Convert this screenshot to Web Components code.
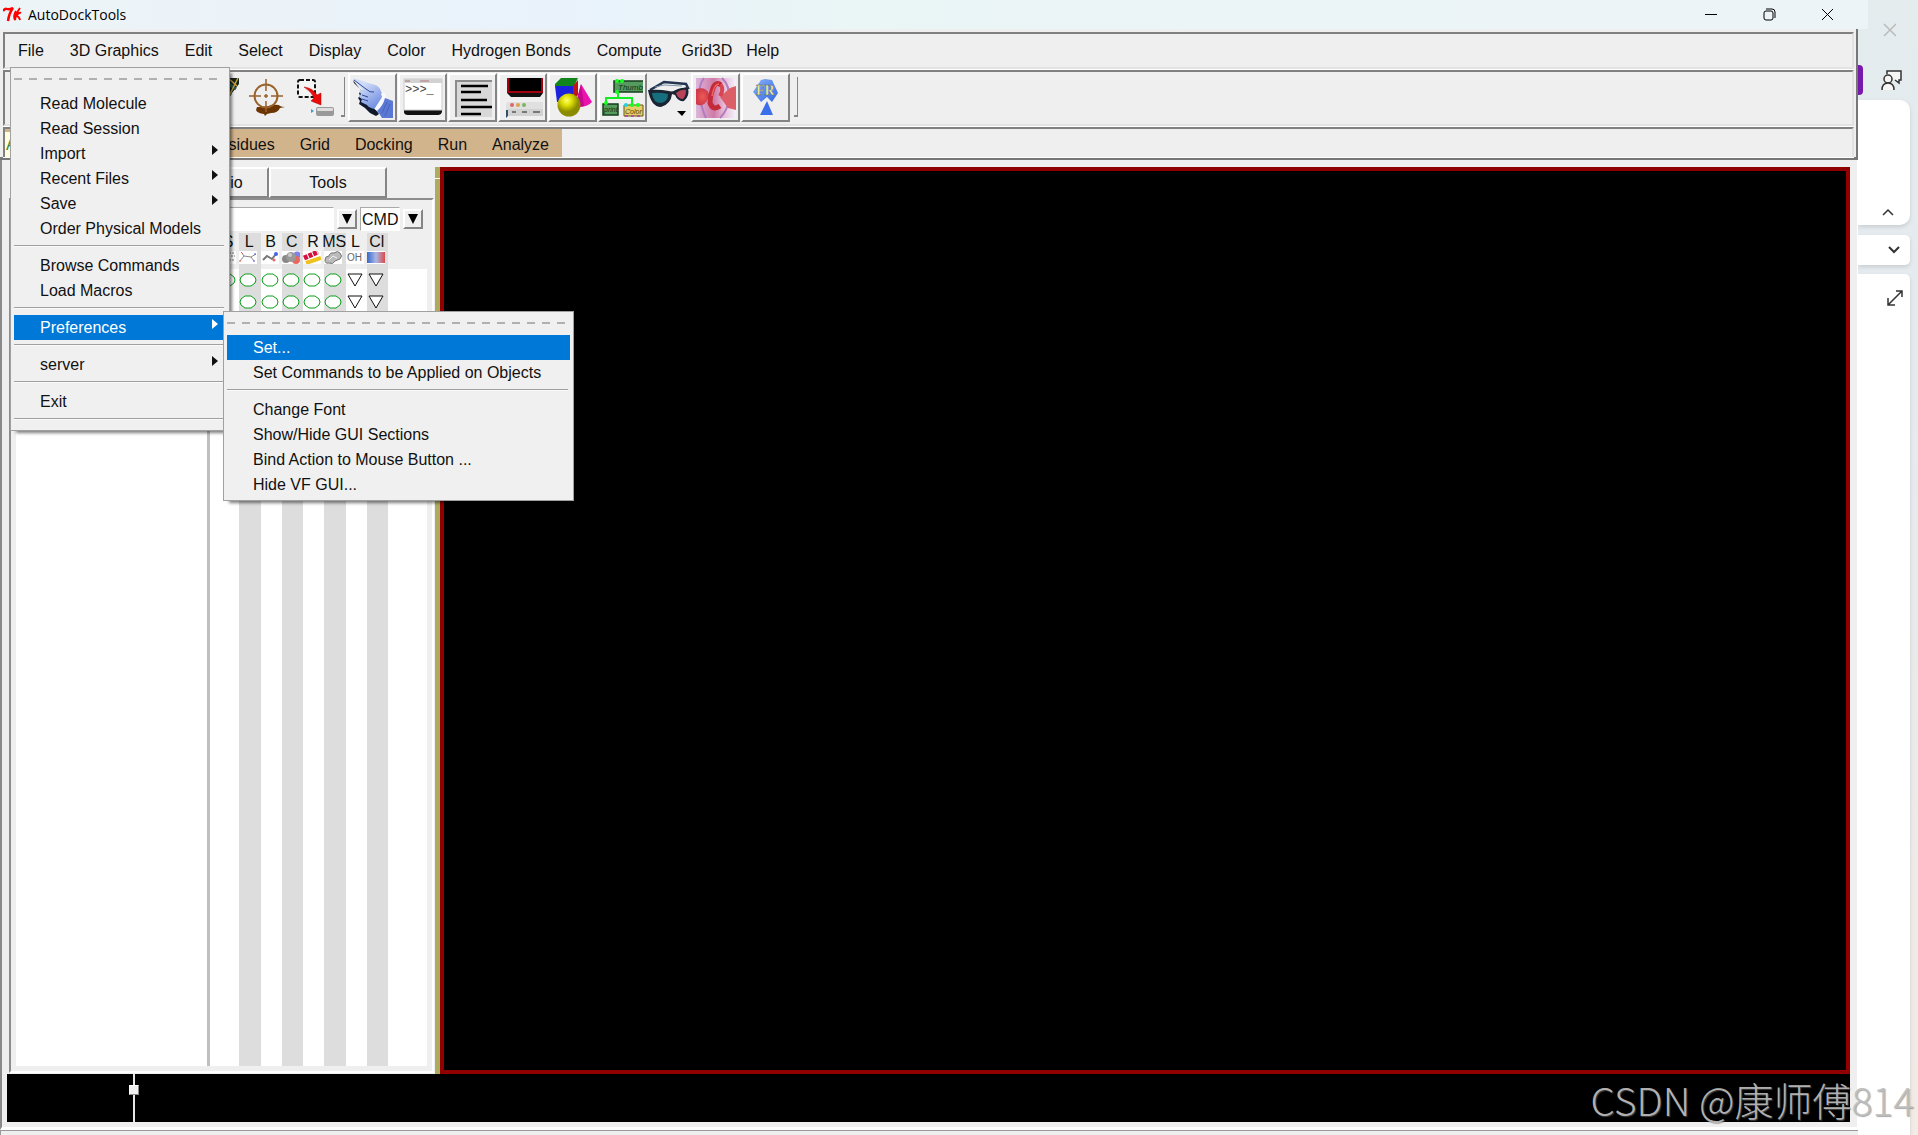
<!DOCTYPE html>
<html lang="en">
<head>
<meta charset="utf-8">
<title>AutoDockTools</title>
<style>
    html, body {
        height: 100%;
        margin: 0;
    }
    body {
        overflow: hidden;
        background: #e5ebee;
        font: 16px/25px "Liberation Sans", Arial, sans-serif;
        color: #111;
    }
</style>
</head>
<body>
<adt-desktop></adt-desktop>

<script>
// Toolbar pictures, all drawn on a 40x40 grid.
const ICONS = {
    plaid: `
        <path d="M4 0H41V6L30 20 10 12Z" fill="#16241f"/>
        <path d="M28 4l10 7M26 12l7 5" stroke="#31554a" stroke-width="3"/>
        <path d="M40 0l-8 16M30 0l9 8" stroke="#c7a23a" stroke-width="1.5"/>`,
    target: `
        <path d="M11 29q10 0 14-2 8-1 9 1 2 1 5 1l-5 1q-2 5-9 5l-4 1-2 2-1-2q-7-1-8-4z" fill="#6b3400"/>
        <circle cx="20" cy="18" r="11.5" fill="none" stroke="#9a622c" stroke-width="2"/>
        <path d="M20 1v12M20 16v4M20 23v11M3 18h12M18 18h4M25 18h12" stroke="#9a622c" stroke-width="1.5"/>`,
    marquee: `
        <rect x="4" y="2" width="17" height="17" rx="2" fill="#f4f4f4" stroke="#111" stroke-width="2" stroke-dasharray="4 2"/>
        <path d="M10 9q9 1 13 8l4-2v12l-10-4 3-3q-2-6-10-11z" fill="#e80c0c" stroke="#a00" stroke-width=".5"/>
        <path d="M17 31l3 2-3 2z" fill="#3a9bc4"/>
        <rect x="22" y="29" width="18" height="9" rx="2" fill="#999"/>
        <rect x="23" y="30" width="16" height="3" rx="1" fill="#ddd"/>`,
    hand: `
        <defs><linearGradient id="g" x1="0" y1="0" x2=".7" y2="1"><stop offset=".3" stop-color="#cfdcf8"/><stop offset="1" stop-color="#6f8ce0"/></linearGradient></defs>
        <path d="M0 2l1 3 8 8-3 2 1 3-2 2 2 3-1 3 6 4 5 5 6 3 3-2z" fill="#10182c"/>
        <path d="M0 1q1-1 3 0l16 5q6 1 8 5l3 7-8 13q-6-1-8-4l-6-3 1-3-3-2 2-3-2-3 4-1z" fill="url(#g)"/>
        <path d="M1 2l12 9q4 4 8 3M9 17l6 2M9 21l6 2" stroke="#324a91" fill="none"/>
        <path d="M29 15q4 3 0 8l-6 9" stroke="#f5f8ff" stroke-width="4" fill="none"/>
        <path d="M32 20l8 3v17H29q-2-4-5-7 6-5 8-13z" fill="#5b78d4"/>
        <path d="M34 24l-5 11M37 26l-5 12" stroke="#4763bd"/>`,
    shell: `
        <path d="M1 31h38v3q-1 3-4 3H5q-4 0-4-3z" fill="#111"/>
        <rect x="1" y="1" width="38" height="31" fill="#fff" stroke="#ccc"/>
        <path d="M1 1h38v4H1z" fill="#d2d2d2"/>
        <path d="M2 3h5M17 3h9" stroke="#a77"/>
        <text x="2" y="15" font-family="Liberation Mono, monospace" font-size="12" fill="#444">&gt;&gt;&gt;_</text>`,
    lines: `
        <rect x="2" y="2" width="37" height="37" fill="#d8d8d8"/>
        <path d="M3 39V3H39" fill="none" stroke="#8b8b8b" stroke-width="2"/>
        <path d="M8 8h27M8 14h20M8 22h26M8 29h31M8 36h20" stroke="#000" stroke-width="2.5"/>`,
    windows: `
        <path d="M4 0h36v15l-3 4H8l-4-4z" fill="#111"/>
        <path d="M5 0v14h34V0" fill="#000" stroke="#a5000f" stroke-width="2"/>
        <path d="M3 27q0-3 3-3h34v14H3z" fill="#e0e0e0"/>
        <path d="M3 32v8l2-2v-6z" fill="#31506b"/>
        <path d="M5 31h35v7H5z" fill="#d2d2d2"/>
        <circle cx="9" cy="27" r="2" fill="#d66"/><circle cx="15" cy="27" r="2" fill="#dda04d"/><circle cx="21" cy="27" r="2" fill="#79b462"/>
        <path d="M9 34h4M19 34h5M30 34h7" stroke="#777" stroke-width="2"/>`,
    shapes: `
        <path d="M2 6L8 0H25L21 8H2z" fill="#11851b"/>
        <path d="M2 8h18v16H4z" fill="#1c22dc"/>
        <path d="M20 8l5-6v15l-5 5z" fill="#c11414"/>
        <path d="M28 6L39 24q-5 6-17 5z" fill="#ec12ad"/>
        <path d="M28 6l3 22-9 1z" fill="#c50791"/>
        <defs><radialGradient id="s" cx=".4" cy=".3"><stop stop-color="#ffff6a"/><stop offset=".45" stop-color="#dede06"/><stop offset="1" stop-color="#8b8b00"/></radialGradient></defs>
        <circle cx="16" cy="27" r="11.5" fill="url(#s)"/>`,
    network: `
        <path d="M40 3H11v11h29" fill="#559b5f" stroke="#163e1d" stroke-width="1.5"/>
        <text x="15" y="12" font-family="Liberation Sans, sans-serif" font-size="8" font-style="italic" fill="#0e3013">Thumb</text>
        <path d="M15 14v6M3 26v-6h26v6" fill="none" stroke="#12ed21" stroke-width="2"/>
        <path d="M0 26h15v11H0z" fill="#559b5f" stroke="#163e1d" stroke-width="1.5"/>
        <text x="1" y="34" font-family="Liberation Sans, sans-serif" font-size="7" font-style="italic" fill="#0e3013">print</text>
        <path d="M21 27h19v11H21z" fill="#e6cf69" stroke="#685716"/>
        <text x="22" y="36" font-family="Liberation Sans, sans-serif" font-size="7" font-style="italic" fill="#4d3f0c">Color</text>
        <path d="M22 38h18" stroke="#b54da0" stroke-width="2" stroke-dasharray="3 3"/>
        <circle cx="14" cy="3" r="2" fill="#14ff1e"/><circle cx="19" cy="3" r="2" fill="#14ff1e"/><circle cx="14" cy="14" r="2" fill="#14ff1e"/><circle cx="3" cy="25" r="2" fill="#14ff1e"/><circle cx="23" cy="27" r="2" fill="#20d5e4"/><circle cx="29" cy="27" r="2" fill="#14ff1e"/><circle cx="35" cy="27" r="2" fill="#14ff1e"/>`,
    glasses: `
        <path d="M2 12L16 4l22 2 2 4-20 6" fill="none" stroke="#23354f" stroke-width="2.5"/>
        <path d="M7 9l9-2 18 1" fill="none" stroke="#7f93a8"/>
        <path d="M0 12q11-1 21 1l4 1q6-5 15-4 2 8-4 13-6 1-9-6l-3-1q-1 10-11 13Q3 29 0 12z" fill="#1b2433"/>
        <path d="M4 15q8-1 16 1 0 8-7 9-8 0-9-10z" fill="#166f7e"/>
        <path d="M28 15q5-4 10-3 0 6-3 9-5 0-7-6z" fill="#b94358"/>
        <path d="M29 33h9l-4 5z" fill="#000"/>`,
    orbital: `
        <defs><linearGradient id="o"><stop stop-color="#dcb6dc"/><stop offset=".45" stop-color="#cf7aa6"/><stop offset=".7" stop-color="#e6bcd9"/><stop offset="1" stop-color="#f4f2fb"/></linearGradient>
        <radialGradient id="r"><stop stop-color="#ef5a55"/><stop offset="1" stop-color="#cf3b4a"/></radialGradient></defs>
        <path d="M0 0h40v40H0z" fill="url(#o)"/>
        <path d="M8 0Q2 8 4 20t6 20M26 0q8 8 7 20t-9 20" fill="none" stroke="#b07cc0" stroke-width="2"/>
        <path d="M0 11q10-3 13 5-1 9-7 11-4 1-6-1z" fill="url(#r)"/>
        <path d="M24 19l10-9 6-2v24l-8-2z" fill="#dc5f68"/>
        <path d="M25 7q-5-4-8 3t-3 15q3 8 10 3" fill="none" stroke="#c42b38" stroke-width="5"/>
        <path d="M25 7q3 5-1 11" fill="none" stroke="#d84450" stroke-width="4"/>
        <path d="M23 6q-5 0-7 12" fill="none" stroke="#f0665f" stroke-width="1.5"/>`,
    fr: `
        <defs><linearGradient id="f" x1="0" y1="0" x2="1" y2="1"><stop stop-color="#8bb2f8"/><stop offset="1" stop-color="#2f66e4"/></linearGradient></defs>
        <path d="M7 14L15 2l4-1 7 1 6 13-6 9-5-5-6 5-7-9z" fill="url(#f)"/>
        <path d="M21 23l6 14H14z" fill="#3a6eea"/>
        <text x="10" y="17" font-family="Liberation Serif, serif" font-size="14" font-weight="bold" fill="#f7efa0" stroke="#5c6a60" stroke-width=".4">FR</text>`
};

// Small pictures under the column letters of the dashboard, on an 18x13 grid.
const COLUMN_ICONS = {
    dots: '<path d="M11 2h5M13 5h4M11 9h5" stroke="#777" stroke-dasharray="2 1"/>',
    lines: '<path d="M1 10l4-5 7 1 5-3M5 5L3 2M12 6l3 4" fill="none" stroke="#888"/><path d="M2 1l2 2M1 9v2" stroke="#e55"/><path d="M16 2v2M15 9v2" stroke="#55e"/>',
    sticks: '<path d="M2 9l4-4 5 3 4-5" fill="none" stroke="#777" stroke-width="2"/><circle cx="15" cy="3" r="2" fill="#46e"/><circle cx="13" cy="9" r="1.5" fill="#e66"/>',
    spheres: '<circle cx="15" cy="4" r="3.5" fill="#7f82e8"/><circle cx="14" cy="9" r="4" fill="#e66860"/><circle cx="4" cy="8" r="4" fill="#888"/><circle cx="9" cy="6" r="5" fill="#999"/><circle cx="8" cy="4" r="2" fill="#ccc"/>',
    ribbon: '<path d="M1 7L15 1" stroke="#d3113b" stroke-width="5" stroke-dasharray="4 1"/><path d="M3 12l15-5" stroke="#efc21e" stroke-width="4"/>',
    surface: '<path d="M1 9q0-4 4-4 1-4 5-3 4-3 6 0 3 3 0 6l-5 2q-2 4-6 2-4 1-4-3z" fill="#bbb" stroke="#777"/><path d="M5 9l4-4 4 2" stroke="#eee" fill="none"/>',
    label: '<text x="1" y="10" font-family="Liberation Sans, sans-serif" font-size="10" fill="#666">OH</text>',
    color: '<defs><linearGradient id="c"><stop stop-color="#3768c8"/><stop offset=".5" stop-color="#a9b8e6"/><stop offset="1" stop-color="#dc4a4a"/></linearGradient></defs><path d="M0 1h18v11H0z" fill="url(#c)"/>'
};

function define(name, cls) {
    customElements.get(name) || customElements.define(name, cls);
}

class TitleBar extends HTMLElement {
    constructor() {
        super();
        this.attachShadow({ mode: 'open' }).innerHTML = `
        <style>
            :host {
                display: flex;
                align-items: center;
                height: 29px;
                padding-left: 3px;
                margin-right: -10px;
                background: linear-gradient(90deg, #edf4f7, #e9f2fb 30%, #eaf5f6 45%, #edf4f8);
                font: 14px/28px "Open Sans", "Noto Sans", sans-serif;
                color: #000;
            }
            .title { flex: 1; margin-left: 6px; }
            button {
                width: 58px;
                height: 28px;
                padding: 0;
                border: 0;
                background: none;
            }
            .buttons { display: flex; margin-right: 12px; }
            svg { display: block; margin: auto; fill: none; stroke: #000; }
            .logo { margin: 0; stroke: red; stroke-width: 2; }
        </style>
        <svg class="logo" width="19" height="15" viewBox="0 0 19 15">
            <path d="M0 4q2-3 4-2t6-1Q6 6 5 14" stroke-width="2.5"/>
            <path d="M17 1q-4 5-5 12M13 4q-3 5-1 9M18 6q-2-1-5 3 3 0 4 4"/>
        </svg>
        <span class="title">AutoDockTools</span>
        <div class="buttons">
            <button aria-label="Minimize"><svg width="12" height="12"><path d="M0 5h12v1H0z" fill="#000" stroke="none"/></svg></button>
            <button aria-label="Restore"><svg width="13" height="13"><rect x="1" y="3" width="9" height="9" rx="2"/><path d="M3 1h6q3 0 3 3v6"/></svg></button>
            <button aria-label="Close"><svg width="13" height="13"><path d="M1 1l11 11M12 1L1 12"/></svg></button>
        </div>`;
    }
}
define('title-bar', TitleBar);

class MenuItem extends HTMLElement {
    constructor() {
        super();
        this.attachShadow({ mode: 'open' }).innerHTML = `
        <style>
            :host { display: block; position: relative; }
            button {
                display: flex;
                align-items: center;
                justify-content: space-between;
                width: 100%;
                height: 25px;
                padding: 0 8px 0 26px;
                border: 0;
                background: none;
                color: inherit;
                font: inherit;
                white-space: nowrap;
            }
            :host([active]) button { background: #0078d7; color: #fff; }
            svg { display: none; margin-bottom: 8px; fill: currentColor; }
            :host([cascade]) svg { display: block; }
        </style>
        <button role="menuitem"><slot></slot><svg width="6" height="10"><path d="M0 0l6 5-6 5z"/></svg></button>
        <slot name="submenu"></slot>`;
    }
}
define('menu-item', MenuItem);

class MenuPopup extends HTMLElement {
    constructor() {
        super();
        this.attachShadow({ mode: 'open' }).innerHTML = `
        <style>
            :host {
                display: block;
                position: absolute;
                z-index: 5;
                box-sizing: border-box;
                padding: 0 3px 4px;
                border: 1px solid #a0a0a0;
                background: #f0f0f0;
                box-shadow: 4px 4px 3px -2px rgba(0, 0, 0, .5);
                color: #111;
            }
            .tearoff {
                height: 2px;
                padding: 10px 0 11px;
                margin-right: 2px;
                background: repeating-linear-gradient(90deg, #b0b0b0 0 8px, transparent 8px 15px) content-box;
            }
            ::slotted(hr) {
                height: 1px;
                margin: 4px 2px 6px 0;
                border: 0;
                border-top: 1px solid #a0a0a0;
                background: #fafafa;
            }
        </style>
        <div class="tearoff"></div>
        <slot></slot>`;
        this.setAttribute('role', 'menu');
    }
}
define('menu-popup', MenuPopup);

class MenuStrip extends HTMLElement {
    constructor() {
        super();
        this.attachShadow({ mode: 'open' }).innerHTML = `
        <style>
            :host { display: flex; align-items: center; position: relative; }
            button {
                padding: 0 13px;
                border: 0;
                background: none;
                color: inherit;
                font: inherit;
                white-space: nowrap;
            }
            .narrow { padding: 0 7px; }
            .file { left: 5px; top: 33px; width: 220px; }
            .prefs { left: 209px; top: -4px; width: 351px; padding-bottom: 3px; }
        </style>
        <button>File</button>
        <button>3D Graphics</button>
        <button>Edit</button>
        <button>Select</button>
        <button>Display</button>
        <button>Color</button>
        <button>Hydrogen Bonds</button>
        <button>Compute</button>
        <button class="narrow">Grid3D</button>
        <button class="narrow">Help</button>
        <menu-popup class="file">
            <menu-item>Read Molecule</menu-item>
            <menu-item>Read Session</menu-item>
            <menu-item cascade>Import</menu-item>
            <menu-item cascade>Recent Files</menu-item>
            <menu-item cascade>Save</menu-item>
            <menu-item>Order Physical Models</menu-item>
            <hr>
            <menu-item>Browse Commands</menu-item>
            <menu-item>Load Macros</menu-item>
            <hr>
            <menu-item cascade active>Preferences
                <menu-popup class="prefs" slot="submenu">
                    <menu-item active>Set...</menu-item>
                    <menu-item>Set Commands to be Applied on Objects</menu-item>
                    <hr>
                    <menu-item>Change Font</menu-item>
                    <menu-item>Show/Hide GUI Sections</menu-item>
                    <menu-item>Bind Action to Mouse Button ...</menu-item>
                    <menu-item>Hide VF GUI...</menu-item>
                </menu-popup>
            </menu-item>
            <hr>
            <menu-item cascade>server</menu-item>
            <hr>
            <menu-item>Exit</menu-item>
            <hr>
        </menu-popup>`;
    }
}
define('menu-strip', MenuStrip);

class ToolButton extends HTMLElement {
    connectedCallback() {
        const icon = this.getAttribute('icon');
        this.attachShadow({ mode: 'open' }).innerHTML = `
        <style>
            :host { display: block; }
            button {
                display: block;
                box-sizing: border-box;
                width: 49px;
                height: 49px;
                padding: 3px;
                border: 2px solid;
                border-color: #fff #858585 #858585 #fff;
                background: #efefef;
            }
            :host([flat]) button { width: 48px; border-color: transparent; }
            :host([icon="glasses"]) button { width: 42px; padding: 3px 0; border-width: 2px 0; }
            svg { display: block; overflow: visible; }
        </style>
        <button aria-label="${icon}"><svg width="40" height="40" viewBox="0 0 40 40">${ICONS[icon]}</svg></button>`;
    }
}
define('tool-button', ToolButton);

class ToolStrip extends HTMLElement {
    constructor() {
        super();
        this.attachShadow({ mode: 'open' }).innerHTML = `
        <style>
            :host { display: flex; align-items: flex-start; padding: 1px 0 0 188px; }
            .raised { display: flex; gap: 1px; }
            .sep {
                width: 3px;
                height: 38px;
                margin: 4px 3px 0 4px;
                border: solid #858585;
                border-width: 0 1px 2px 0;
            }
        </style>
        <tool-button flat icon="plaid"></tool-button>
        <tool-button flat icon="target"></tool-button>
        <tool-button flat icon="marquee"></tool-button>
        <div class="sep"></div>
        <div class="raised">
            <tool-button icon="hand"></tool-button>
            <tool-button icon="shell"></tool-button>
            <tool-button icon="lines"></tool-button>
            <tool-button icon="windows"></tool-button>
            <tool-button icon="shapes"></tool-button>
            <tool-button icon="network"></tool-button>
            <tool-button flat icon="glasses"></tool-button>
            <tool-button icon="orbital"></tool-button>
            <tool-button icon="fr"></tool-button>
        </div>
        <div class="sep"></div>`;
    }
}
define('tool-strip', ToolStrip);

class AdtStrip extends HTMLElement {
    constructor() {
        super();
        this.attachShadow({ mode: 'open' }).innerHTML = `
        <style>
            :host { display: flex; }
            .bar {
                display: flex;
                align-items: flex-end;
                justify-content: flex-end;
                width: 557px;
                background: #d2b48c;
            }
            .bar .version { flex: 1; background: #ffffe0; color: #2e8b2e; text-align: left; padding: 0 1px; }
            button {
                padding: 0 13px 0 12px;
                border: 0;
                background: none;
                color: inherit;
                font: inherit;
                white-space: nowrap;
            }
        </style>
        <div class="bar">
            <button class="version">ADT</button>
            <button>Flexible Residues</button>
            <button>Grid</button>
            <button>Docking</button>
            <button>Run</button>
            <button>Analyze</button>
        </div>`;
    }
}
define('adt-strip', AdtStrip);

class DashBoard extends HTMLElement {
    columns = [
        ['S', 'dots'], ['L', 'lines'], ['B', 'sticks'], ['C', 'spheres'],
        ['R', 'ribbon'], ['MS', 'surface'], ['L', 'label'], ['Cl', 'color']
    ];

    constructor() {
        super();
        this.attachShadow({ mode: 'open' }).innerHTML = `
        <style>
            :host { display: flex; flex-direction: column; min-height: 0; padding: 0 1px 1px 2px; }
            .tabs { display: flex; justify-content: flex-end; padding-right: 47px; }
            button, input { box-sizing: border-box; font: inherit; color: inherit; }
            .tabs button {
                height: 31px;
                padding: 0;
                border: 2px solid;
                border-color: #fff #858585 #858585 #fff;
                background: #efefef;
            }
            .tabs .studio { width: 98px; }
            .tabs .tools { width: 118px; }
            .page {
                flex: 1;
                display: flex;
                flex-direction: column;
                min-height: 0;
                border: 2px solid;
                border-color: #8d8d8d #fff #fff #8d8d8d;
                padding: 7px 5px 5px;
            }
            .search { display: flex; align-items: center; gap: 3px; padding: 0 4px 2px 0; }
            input {
                min-width: 0;
                height: 24px;
                padding: 0 1px;
                border: 1px solid;
                border-color: #aaa #fff #fff #aaa;
                border-radius: 0;
                background: #fff;
            }
            .query { flex: 1; }
            .cmd { width: 40px; }
            .search button {
                width: 20px;
                height: 20px;
                padding: 0;
                border: 2px solid;
                border-color: #fff #858585 #858585 #fff;
                background: #efefef;
            }
            svg { display: block; margin: auto; }
            .split { flex: 1; display: flex; min-height: 0; background: #fff; }
            .tree { width: 191px; }
            .sash { width: 3px; margin-right: 1px; background: #bfbfbf; }
            .grid { flex: 1; display: grid; grid-template-columns: 7px 170px 1fr; background: linear-gradient(#efefef 36px, #fff 36px); }
            .cols { grid-column: 2; display: grid; grid-template-columns: repeat(8, 1fr); }
            .col { display: flex; flex-direction: column; align-items: flex-start; }
            .col:nth-child(even) { background: #ddd; }
            .col b { display: flex; justify-content: center; width: 20px; font-weight: normal; line-height: 18px; }
            .col .pic { background: #fff; width: 18px; height: 13px; margin: 0 0 9px; }
            .col .mark { margin: 0 0 8px; }
        </style>
        <div class="tabs">
            <button class="studio">Studio</button>
            <button class="tools">Tools</button>
        </div>
        <div class="page">
            <div class="search">
                <input class="query" aria-label="Selection">
                <button aria-label="Selection history"><svg width="10" height="10"><path d="M0 0h10L5 10z"/></svg></button>
                <input class="cmd" aria-label="Mode" value="CMD">
                <button aria-label="Mode list"><svg width="10" height="10"><path d="M0 0h10L5 10z"/></svg></button>
            </div>
            <div class="split">
                <div class="tree"></div>
                <div class="sash"></div>
                <div class="grid"><div class="cols"></div></div>
            </div>
        </div>`;
    }

    connectedCallback() {
        const circle = '<svg class="mark" width="18" height="14"><path d="M6 1h6l4 3 1 3-1 3-4 3H6l-4-3-1-3 1-3z" fill="#fff" stroke="#0a9f18"/></svg>';
        const triangle = '<svg class="mark" width="18" height="14"><path d="M2 1h14L9 13z" fill="#fff" stroke="#111"/></svg>';
        const cols = this.shadowRoot.querySelector('.cols');
        this.columns.forEach(([letter, icon], i) => {
            const col = document.createElement('div');
            col.className = 'col';
            const mark = i > 5 ? triangle : circle;
            // the first column has a mark in its first row only
            col.innerHTML = `<b>${letter}</b><svg class="pic" width="18" height="13">${COLUMN_ICONS[icon]}</svg>${mark}${i > 0 ? mark : ''}`;
            cols.appendChild(col);
        });
    }
}
define('dash-board', DashBoard);

class SidePane extends HTMLElement {
    constructor() {
        super();
        this.attachShadow({ mode: 'open' }).innerHTML = `
        <style>
            :host {
                display: flex;
                flex-direction: column;
                padding-right: 8px;
                background: linear-gradient(#e4ecee, #e5eaef 30%, #f2ebe6);
            }
            button {
                display: flex;
                padding: 0;
                border: 0;
                background: none;
            }
            svg { fill: none; stroke: #333; stroke-width: 1.5; }
            .close { height: 65px; align-items: center; padding: 0 14px 5px 25px; }
            .share { display: flex; align-items: center; gap: 18px; height: 30px; margin-bottom: 5px; }
            .share i { width: 5px; height: 30px; border-radius: 0 4px 4px 0; background: #7719aa; }
            .card {
                display: flex;
                align-items: center;
                justify-content: flex-end;
                box-sizing: border-box;
                background: #fff;
                box-shadow: 0 2px 4px rgba(0, 0, 0, .12);
            }
            .ribbon { height: 125px; align-items: flex-end; padding: 0 16px 9px; border-radius: 0 10px 10px 0; }
            .find { height: 30px; margin: 10px 0 9px; padding: 0 10px; border-radius: 0 5px 5px 0; }
            .note { flex: 1; align-items: flex-start; padding: 16px 7px; border-radius: 0 5px 0 0; }
        </style>
        <button class="close" aria-label="Close pane"><svg width="14" height="14" style="stroke: #bbb"><path d="M1 1l12 12M13 1L1 13"/></svg></button>
        <div class="share"><i></i><button aria-label="Share"><svg width="22" height="22"><path d="M6 5V2h14v9h-2v3l-4-3" fill="#f8f5f5"/><circle cx="7" cy="10" r="4" fill="#f8f5f5"/><path d="M1 21q0-7 6-7t6 7" fill="#f8f5f5"/></svg></button></div>
        <div class="card ribbon"><button aria-label="Collapse"><svg width="12" height="8"><path d="M1 7l5-5 5 5"/></svg></button></div>
        <div class="card find"><button aria-label="Expand"><svg width="12" height="8" style="stroke-width: 2"><path d="M1 1l5 5 5-5"/></svg></button></div>
        <div class="card note"><button aria-label="Full page"><svg width="16" height="16"><path d="M1 15L15 1M9 1h6v6M1 8v7h7"/></svg></button></div>`;
    }
}
define('side-pane', SidePane);

class AdtWindow extends HTMLElement {
    constructor() {
        super();
        this.attachShadow({ mode: 'open' }).innerHTML = `
        <style>
            :host {
                display: flex;
                flex-direction: column;
                position: relative;
                z-index: 1;
                min-width: 0;
                background: #efefef;
            }
            header {
                display: flex;
                flex-direction: column;
                gap: 1px;
                padding: 3px 2px 0 3px;
                border: solid #777;
                border-width: 0 2px 3px 0;
            }
            header > * {
                box-sizing: border-box;
                border: 2px solid;
                border-color: #808080 #e2e2e2 #e2e2e2 #808080;
                box-shadow: 0 1px #fff;
            }
            menu-strip { height: 37px; z-index: 3; }
            tool-strip { height: 56px; }
            adt-strip { height: 30px; border-bottom: 0; }
            main {
                flex: 1;
                display: flex;
                flex-direction: column;
                min-height: 0;
                padding: 7px 7px 5px 5px;
                border: solid;
                border-color: #8a8a8a #fff #fff #8a8a8a;
                border-width: 0 1px 3px 2px;
            }
            .work { flex: 1; display: grid; grid-template-columns: 428px 5px minmax(0, 1fr); min-height: 0; }
            .khaki { background: linear-gradient(#fff, #fff) 0 11px / 5px 1px no-repeat #acab5e; }
            .camera { border: 4px solid #900000; background: #000; }
            .timeline { display: flex; height: 48px; background: #000; }
            .handle { display: flex; justify-content: center; width: 2px; margin-left: 126px; background: #e6e6e6; }
            .handle i {
                flex: none;
                width: 8px;
                height: 8px;
                margin-top: 11px;
                border: 1px solid;
                border-color: #fff #888 #888 #fff;
                background: #efefef;
            }
            footer { height: 4px; border: solid #999; border-width: 1px 0 0 1px; }
        </style>
        <title-bar></title-bar>
        <header>
            <menu-strip></menu-strip>
            <tool-strip></tool-strip>
            <adt-strip></adt-strip>
        </header>
        <main>
            <div class="work">
                <dash-board></dash-board>
                <div class="khaki"></div>
                <div class="camera"></div>
            </div>
            <div class="timeline"><div class="handle"><i></i></div></div>
        </main>
        <footer></footer>`;
    }
}
define('adt-window', AdtWindow);

class AdtDesktop extends HTMLElement {
    constructor() {
        super();
        this.attachShadow({ mode: 'open' }).innerHTML = `
        <style>
            :host { display: grid; grid-template-columns: minmax(0, 1fr) 60px; height: 100vh; position: relative; }
            .mark {
                position: absolute;
                z-index: 9;
                right: 4px;
                bottom: 12px;
                font: 300 39px/48px "Noto Sans CJK SC", sans-serif;
                color: rgba(190, 190, 190, .93);
                text-shadow: 1px 1px 1px rgba(110, 110, 110, .6);
                white-space: nowrap;
            }
        </style>
        <adt-window></adt-window>
        <side-pane></side-pane>
        <div class="mark">CSDN @康师傅814</div>`;
    }
}
define('adt-desktop', AdtDesktop);
</script>
</body>
</html>
